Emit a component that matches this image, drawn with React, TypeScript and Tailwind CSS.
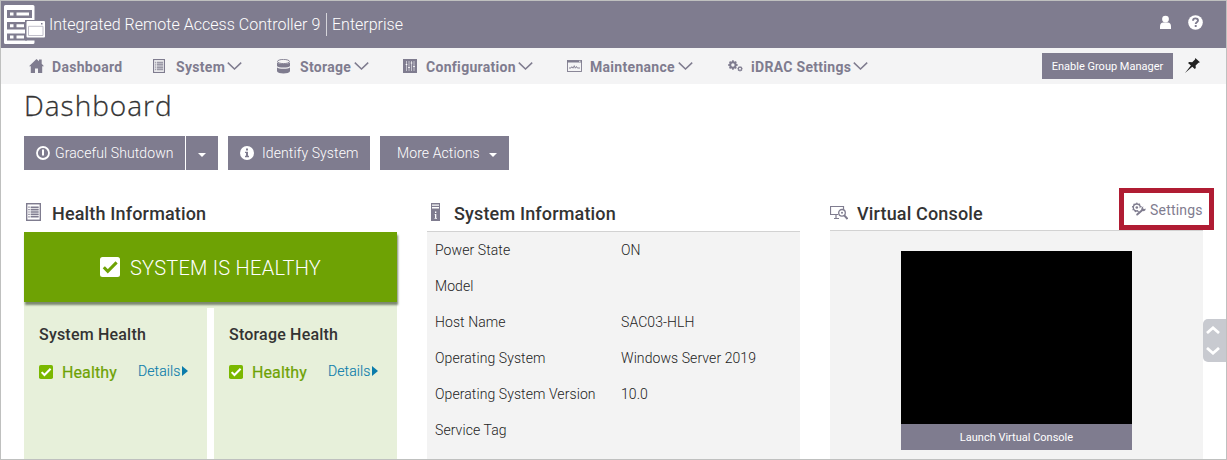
import type { ReactNode } from "react";

const Chevron = ({ className = "" }: { className?: string }) => (
  <svg className={`block h-[8px] w-[15px] shrink-0 ${className}`} viewBox="0 0 15 8" fill="none" stroke="currentColor" strokeWidth="1.5">
    <path d="M.8.6 7.5 7 14.2.6" />
  </svg>
);

const HouseIcon = () => (
  <svg className="block h-[14px] w-[15px]" viewBox="0 0 15 14" fill="currentColor">
    <path d="M7.5 0 10 2.300V.5h2.700v4.300L15 7.200h-1.800V14H9V9.500H6V14H1.800V7.200H0z" />
  </svg>
);

const ListIcon = ({ className }: { className: string }) => (
  <svg className={`block ${className}`} viewBox="0 0 13 15" fill="none" stroke="currentColor" preserveAspectRatio="none">
    <rect x=".6" y=".6" width="11.800" height="13.800" strokeWidth="1.200" />
    <path d="M4 3.500h7M4 5.500h7M4 7.500h7M4 9.500h7M4 11.500h7" strokeWidth="1.300" />
    <path d="M2 3.500h1.200M2 5.500h1.200M2 7.500h1.200M2 9.500h1.200M2 11.500h1.200" strokeWidth="1" />
  </svg>
);

const StorageIcon = () => (
  <svg className="block h-[15px] w-[13px]" viewBox="0 0 13 15" fill="currentColor">
    <ellipse cx="6.500" cy="2.500" rx="6" ry="2.100" fill="#f4f4f4" stroke="currentColor" strokeWidth=".9" />
    <path d="M0 3.200C1 5.200 12 5.200 13 3.200V7C12 9 1 9 0 7z" />
    <path d="M0 8.300c1 2 12 2 13 0v4c-1 3-12 3-13 0z" />
  </svg>
);

const SlidersIcon = () => (
  <svg className="block h-[14px] w-[14px]" viewBox="0 0 14 14">
    <rect width="14" height="14" fill="currentColor" />
    <path d="M3.500 2v10M6 2v10M8.500 2v10M11 2v10" stroke="#e4e4e8" strokeWidth=".7" />
    <path d="M2.700 5.500h1.600M5.200 8.500h1.600M7.700 4h1.600M10.200 7.500h1.600" stroke="#fff" strokeWidth="1.200" />
  </svg>
);

const MonitorIcon = () => (
  <svg className="block h-[12px] w-[15px]" viewBox="0 0 15 12" fill="none" stroke="currentColor">
    <rect x=".5" y=".5" width="14" height="11" strokeWidth=".9" />
    <path d="M0 1.500h15" strokeWidth="2" />
    <path d="M12 1.300h1.500" stroke="#f4f4f4" strokeWidth=".9" />
    <path d="M2 8h2l.8-1.300L6 8.200l1.300-2.500 1 2.500L9.500 6.500l.8 1.500H13" strokeWidth=".9" />
  </svg>
);

const Gear = ({ cx, cy, r, teeth, sw }: { cx: number; cy: number; r: number; teeth: number; sw: number }) => (
  <g>
    <circle cx={cx} cy={cy} r={r} fill="none" stroke="currentColor" strokeWidth={sw} />
    {Array.from({ length: teeth }, (_, i) => (
      <rect key={i} x={cx - sw * 0.45} y={cy - r - sw} width={sw * 0.9} height={sw} fill="currentColor" transform={`rotate(${(i * 360) / teeth} ${cx} ${cy})`} />
    ))}
  </g>
);

const GearsIcon = () => (
  <svg className="block h-[12px] w-[15px]" viewBox="0 0 15 12">
    <Gear cx={4.9} cy={5} r={2.7} teeth={8} sw={2} />
    <Gear cx={12} cy={8.8} r={1.6} teeth={8} sw={1.1} />
  </svg>
);

const ServerLogo = () => (
  <svg className="block h-[39px] w-[41px]" viewBox="0 0 41 39">
    <path d="M1.500 0H29a1.500 1.500 0 0 1 1.500 1.500V15H21v20.500h9.500v2A1.500 1.500 0 0 1 29 39H1.500A1.500 1.500 0 0 1 0 37.500v-36A1.500 1.500 0 0 1 1.500 0z" fill="#fff" />
    <path d="M3 5h25v8H3zM3 17h20v7.500H3zM3 28.500h20v7H3z" fill="#7f7c8f" />
    <path d="M6 7.500h3.500v3H6zM12.500 7.500H25v3H12.500zM6 19.200h3.500v3H6zM12.500 19.200H20v3h-7.500zM6 30.500h3.500v3H6zM12.500 30.500H20v3h-7.500z" fill="#fff" />
    <path d="M23.500 16H40a1 1 0 0 1 1 1v14.500a1 1 0 0 1-1 1H23.500a1 1 0 0 1-1-1V17a1 1 0 0 1 1-1z" fill="#fff" />
    <path d="M24.500 21.300h14.500v9.200H24.500z" fill="none" stroke="#bab8c4" strokeWidth=".9" />
    <path d="M37 18h1.500v1.500H37z" fill="#7f7c8f" />
  </svg>
);

const CheckBox = ({ className, tick }: { className: string; tick: string }) => (
  <svg className={`block shrink-0 ${className}`} viewBox="0 0 20 20">
    <rect width="20" height="20" rx="2.500" fill="currentColor" />
    <path d="m3.800 10.200 4 4.200 8.800-9" fill="none" stroke={tick} strokeWidth="3" />
  </svg>
);

const Caret = () => (
  <svg className="block h-[4px] w-[8px]" viewBox="0 0 8 4" fill="#fff"><path d="M0 0h8L4 4z" /></svg>
);

const NavItem = ({ icon, label, width, textWidth, arrow = true }: { icon: ReactNode; label: string; width: string; textWidth: string; arrow?: boolean }) => (
  <div className={`flex h-full shrink-0 items-center ${width}`}>
    <span className="flex w-[23px] shrink-0 items-center">{icon}</span>
    <span className={`whitespace-nowrap pt-[2px] text-[14px] font-bold tracking-[0.3px] ${textWidth}`}>{label}</span>
    {arrow && <Chevron className="ml-[2px]" />}
  </div>
);

const Heading = ({ icon, children, pad }: { icon: ReactNode; children: string; pad: string }) => (
  <div className="flex h-[36px] items-center text-[#7f7c8f]">
    <span className={`flex shrink-0 items-center ${pad}`}>{icon}</span>
    <h2 className="whitespace-nowrap pt-[2px] text-[18px] font-medium leading-none tracking-[0.16px] text-[#333]">{children}</h2>
  </div>
);

const HealthCard = ({ title }: { title: string }) => (
  <div className="h-full w-[183px] bg-[#e7f0da] px-[15px] pt-[17px]">
    <h3 className="text-[16px] font-medium leading-[20px] tracking-[0.2px] text-[#333]">{title}</h3>
    <div className="mt-[17px] flex h-[20px] items-center">
      <CheckBox className="h-[14px] w-[14px] text-[#7ab800]" tick="#fff" />
      <span className="ml-[9px] w-[76px] pt-[2px] text-[16px] tracking-[0.1px] text-[#6ea204] [-webkit-text-stroke:0.2px_#6ea204]">Healthy</span>
      <a className="-mt-[2px] flex items-center text-[14px] text-[#0b7cab]">
        <span className="w-[43px] [-webkit-text-stroke:0.15px_#0b7cab] font-light tracking-[0.1px]">Details</span>
        <svg className="ml-px block h-[10px] w-[6px]" viewBox="0 0 6 10" fill="currentColor"><path d="M0 0 6 5 0 10z" /></svg>
      </a>
    </div>
  </div>
);

const rows = [
  ["Power State", "ON"],
  ["Model", ""],
  ["Host Name", "SAC03-HLH"],
  ["Operating System", "Windows Server 2019"],
  ["Operating System Version", "10.0"],
  ["Service Tag", ""],
];

export default function App() {
  return (
    <div className="relative flex h-[460px] w-[1227px] flex-col overflow-hidden border border-[#bfc0bf] bg-white font-['Roboto',sans-serif] text-[#333]">
      <header className="flex h-[47px] shrink-0 items-center bg-[#7f7c8f] pl-[3px] text-white">
        <ServerLogo />
        <span className="ml-[4px] w-[277px] whitespace-nowrap text-[16px] font-light tracking-[0.03px]">Integrated Remote Access Controller 9</span>
        <span className="h-[23px] w-px bg-[#d5d4da]" />
        <span className="ml-[5px] text-[16px] font-light">Enterprise</span>
        <svg className="-mt-[4px] ml-auto mr-[17px] block h-[15px] w-[11px]" viewBox="0 0 12 15" fill="#fff">
          <circle cx="6" cy="3.800" r="3.700" />
          <path d="M0 14.500V11.500C0 9 1.500 7.500 3.500 7.500h5c2 0 3.500 1.500 3.500 4v3z" />
        </svg>
        <svg className="-mt-[4px] mr-[23px] block h-[15px] w-[15px]" viewBox="0 0 15 15">
          <circle cx="7.500" cy="7.500" r="7.300" fill="#fff" />
          <path d="M5 5.700C5 2.600 10 2.600 10 5.500c0 1.800-2.300 1.800-2.300 3.500M7.700 10v2" fill="none" stroke="#7f7c8f" strokeWidth="1.900" />
        </svg>
      </header>

      <nav className="flex h-[36px] shrink-0 items-center bg-[#f4f4f5] pl-[28px] text-[#7f7c8f]">
        <NavItem icon={<HouseIcon />} label="Dashboard" width="w-[124px]" textWidth="w-[72px]" arrow={false} />
        <NavItem icon={<ListIcon className="h-[14px] w-[12px]" />} label="System" width="w-[124px]" textWidth="w-[49px]" />
        <NavItem icon={<StorageIcon />} label="Storage" width="w-[126px]" textWidth="w-[52px]" />
        <NavItem icon={<SlidersIcon />} label="Configuration" width="w-[164px]" textWidth="w-[90px]" />
        <NavItem icon={<MonitorIcon />} label="Maintenance" width="w-[161px]" textWidth="w-[86px]" />
        <NavItem icon={<GearsIcon />} label="iDRAC Settings" width="w-[180px]" textWidth="w-[100px]" />
        <button className="ml-auto h-[26px] w-[131px] bg-[#7f7c8f] pt-[3px] text-[11px] text-white">Enable Group Manager</button>
        <svg className="-mt-[2px] ml-[12px] mr-[26px] block h-[15px] w-[15px]" viewBox="0 0 15 15" fill="#222">
          <path d="M10.300 0 15 4.300l-1.500.4-2.900 2.800.2 2.500-1 1L7.300 8.700 0 15l5.900-7.500L3 5l1.200-.9 3 .2L10 1.600z" />
        </svg>
      </nav>

      <main className="flex flex-1 flex-col pl-[23px]">
        <h1 className="mt-[4px] h-[34px] font-['Open_Sans',sans-serif] text-[28px] font-light leading-[34px] tracking-[1px] [-webkit-text-stroke:0.3px_#333]">Dashboard</h1>
        <div className="mt-[14px] flex h-[34px] text-[14px] font-light tracking-[0.1px] text-white">
          <button className="flex w-[161px] items-center bg-[#7f7c8f] pl-[12px]">
            <svg className="mr-[5px] block h-[14px] w-[14px]" viewBox="0 0 14 14" fill="none" stroke="#fff">
              <circle cx="7" cy="7" r="6" strokeWidth="1.800" />
              <path d="M7 3.500v6" strokeWidth="2" />
            </svg>
            Graceful Shutdown
          </button>
          <button className="ml-px flex w-[32px] items-center justify-center bg-[#7f7c8f] pt-[3px]"><Caret /></button>
          <button className="ml-[10px] flex w-[142px] items-center bg-[#7f7c8f] pl-[12px]">
            <svg className="mr-[8px] block h-[14px] w-[14px]" viewBox="0 0 14 14">
              <circle cx="7" cy="7" r="7" fill="#fff" />
              <path d="M6 2.500h2v2H6zM5 5.700h3v4h1v1.500H5V9.700h1V7H5z" fill="#7f7c8f" />
            </svg>
            Identify System
          </button>
          <button className="ml-[10px] flex w-[129px] items-center bg-[#7f7c8f] pl-[17px]">
            <span className="w-[92px] text-left">More Actions</span>
            <span className="pt-[3px]"><Caret /></span>
          </button>
        </div>

        <div className="mt-[25px] flex flex-1 gap-[30px]">
          <section className="flex w-[373px] flex-col">
            <Heading icon={<ListIcon className="-mt-[3px] h-[18px] w-[15px]" />} pad="w-[28px] pl-[2px]">Health Information</Heading>
            <div className="relative mt-px flex h-[70px] shrink-0 items-center bg-[#6ea204] pl-[76px] text-white shadow-[1px_3px_2px_#7c8870]">
              <CheckBox className="-mt-px h-[20px] w-[20px]" tick="#6ea204" />
              <span className="ml-[10px] pt-[2px] text-[20px] font-light tracking-[0.25px]">SYSTEM IS HEALTHY</span>
            </div>
            <div className="h-[6px] shrink-0 bg-[#e7f0da]" />
            <div className="flex flex-1 justify-between">
              <HealthCard title="System Health" />
              <HealthCard title="Storage Health" />
            </div>
          </section>

          <section className="flex w-[373px] flex-col">
            <Heading
              pad="w-[27px] pl-[4px]"
              icon={
                <svg className="-mt-[3px] block h-[18px] w-[9px]" viewBox="0 0 9 18">
                  <path d="M0 0h9v18H0z" fill="#7f7c8f" />
                  <path d="M1 1.500h7v1.300H1zM1 4h7v1.500H1zM4 8.500h1.300V10H4zM3.700 11h1.600v4h.7v.8H3.500V15H4v-3h-.3z" fill="#fff" />
                </svg>
              }
            >
              System Information
            </Heading>
            <div className="flex-1 border-t border-[#d2d2d2] bg-[#f3f3f3] pl-[8px]">
              {rows.map(([k, v]) => (
                <div key={k} className="flex h-[36px] items-center text-[14px] font-light leading-none tracking-[0.08px] text-[#222]">
                  <span className="w-[186px]">{k}</span>
                  <span>{v}</span>
                </div>
              ))}
            </div>
          </section>

          <section className="flex w-[373px] flex-col">
            <div className="flex justify-between">
              <Heading
                pad="w-[27px]"
                icon={
                  <svg className="-mt-px block h-[15px] w-[18px]" viewBox="0 0 18 15" fill="none" stroke="#7f7c8f">
                    <path d="M13.500 4V1.500H.5v8H8M4 13.500h5M6 10v3" strokeWidth="1.200" />
                    <circle cx="12" cy="7.800" r="3.300" strokeWidth="1.300" />
                    <circle cx="12" cy="7.800" r="1" fill="#7f7c8f" stroke="none" />
                    <path d="m14.300 10.400 3.200 3.600" strokeWidth="2" />
                  </svg>
                }
              >
                Virtual Console
              </Heading>
              <div className="relative z-10 -mr-[11px] -mt-[7px] flex h-[42px] w-[95px] items-center self-start border-[5px] border-[#b01c33] bg-white pl-[7px] text-[#7f7c8f]">
                <svg className="mr-[4px] block h-[14px] w-[15px] shrink-0" viewBox="0 0 15 14">
                  <Gear cx={5.8} cy={5.5} r={3.5} teeth={9} sw={1.4} />
                  <path d="M7.500 9 10.500 6.500" stroke="#fff" strokeWidth="3" />
                  <circle cx={5.8} cy={5.5} r={1.3} fill="currentColor" />
                  <path d="m6.200 12.500 5.800-5" stroke="currentColor" strokeWidth="2" strokeLinecap="round" />
                  <path d="m12.500 4.500-.7 1.700.9 1 1.900-.7c.3 2-1.400 3.200-3 2.600-1.900-.9-1.600-4 .9-4.600z" fill="currentColor" />
                </svg>
                <span className="pt-[2px] text-[14px] tracking-[0.2px]">Settings</span>
              </div>
            </div>
            <div className="-mt-px flex-1 border-t border-[#d2d2d2] bg-[#f3f3f3] pl-[71px] pt-[19px]">
              <div className="mt-px h-[173px] w-[231px] bg-black" />
              <button className="block h-[26px] w-[231px] bg-[#7f7c8f] pt-[3px] text-[11px] text-white">Launch Virtual Console</button>
            </div>
          </section>
        </div>
      </main>

      <div className="absolute right-0 top-[318px] flex h-[43px] w-[23px] flex-col items-center justify-between rounded-l-[5px] bg-[#c8cad0] py-[7px] pr-[3px]">
        <svg className="block h-[8px] w-[14px]" viewBox="0 0 14 8" fill="none" stroke="#fff" strokeWidth="2.800"><path d="M1 7 7 1.800 13 7" /></svg>
        <svg className="block h-[8px] w-[14px]" viewBox="0 0 14 8" fill="none" stroke="#fff" strokeWidth="2.800"><path d="M1 1 7 6.200 13 1" /></svg>
      </div>
    </div>
  );
}
